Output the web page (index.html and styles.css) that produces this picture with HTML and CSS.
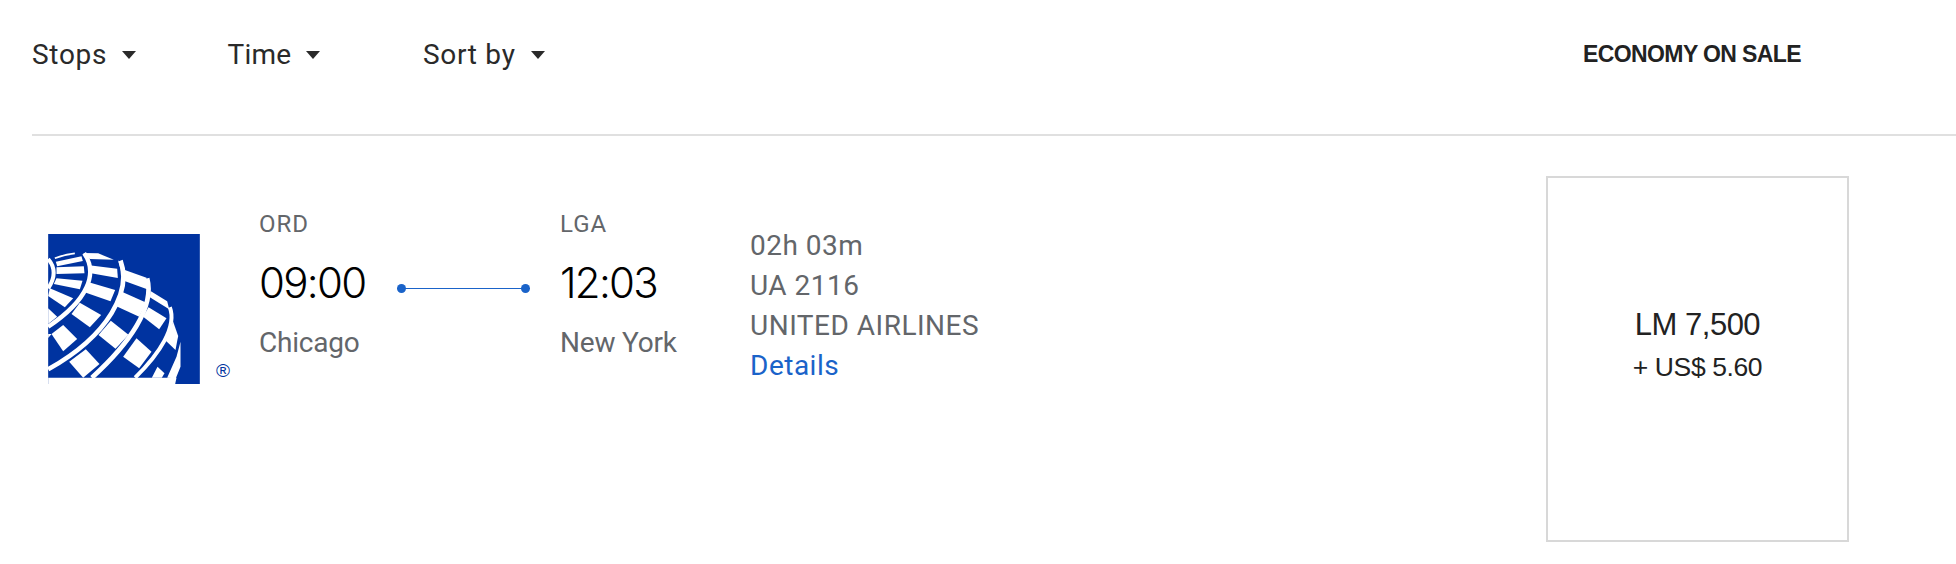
FILE: index.html
```html
<!DOCTYPE html>
<html lang="en">
<head>
<meta charset="utf-8">
<title>Flight results</title>
<link rel="stylesheet" href="styles.css">
</head>
<body>
<header class="bar">
  <div class="filters">
    <button class="filter">Stops<span class="caret"></span></button>
    <button class="filter filter-tight">Time<span class="caret"></span></button>
    <button class="filter">Sort by<span class="caret"></span></button>
  </div>
  <div class="cabin">ECONOMY ON SALE</div>
</header>
<main class="row">
  <div class="logo">
    <svg class="mark" viewBox="55 72 455 450" width="152" height="150" aria-hidden="true">
      <rect x="55" y="72" width="455" height="450" fill="#0033a0"/>
      <polygon points="55,503 440,503 436,522 55,522" fill="#fff"/>
      <g fill="none" stroke="#fff">
        <path d="M75 145Q105 133 135 130" stroke-width="5"/>
        <path d="M55 147Q88 185 55 235" stroke-width="12"/>
        <path d="M163 130C205 190 175 270 55 350" stroke-width="13"/>
        <path d="M272 152C305 240 240 375 55 478" stroke-width="14"/>
        <path d="M352 205C375 290 300 400 186 503" stroke-width="14"/>
        <path d="M420 292C442 350 390 430 316 503" stroke-width="12"/>
      </g>
      <g fill="#fff">
        <polygon points="160,129 205,130 252,149 180,147"/>
        <polygon points="265,150 285,180 290,195 275,190"/>
        <polygon points="78,155 155,139 159,153 82,169"/>
        <polygon points="80,172 162,169 164,190 80,192"/>
        <polygon points="80,205 158,212 150,238 72,222"/>
        <polygon points="60,235 130,265 105,292 55,258"/>
        <polygon points="55,295 82,320 55,342"/>
        <polygon points="178,166 262,176 264,204 175,188"/>
        <polygon points="172,215 256,240 242,274 160,245"/>
        <polygon points="150,278 214,315 180,352 125,312"/>
        <polygon points="65,372 100,345 142,387 100,424"/>
        <polygon points="55,372 65,372 55,384"/>
        <polygon points="285,180 350,203 352,238 282,212"/>
        <polygon points="276,245 350,278 328,320 258,288"/>
        <polygon points="243,332 296,374 257,416 206,375"/>
        <polygon points="168,418 209,462 160,503 118,455"/>
        <polygon points="362,243 412,274 418,298 360,262"/>
        <polygon points="356,292 410,325 388,358 340,320"/>
        <polygon points="320,385 365,425 328,475 280,440"/>
        <polygon points="430,335 445,378 437,420 408,392"/>
        <polygon points="383,470 404,490 396,503 366,503"/>
        <polygon points="452,395 452,470 438,505 412,503 440,440"/>
      </g>
    </svg>
    <span class="reg">®</span>
  </div>
  <div class="leg">
    <div class="stop stop-from">
      <div class="code">ORD</div>
      <div class="time">09:00</div>
      <div class="city">Chicago</div>
    </div>
    <div class="link"></div>
    <div class="stop stop-to">
      <div class="code">LGA</div>
      <div class="time">12:03</div>
      <div class="city">New York</div>
    </div>
  </div>
  <div class="details">
    <div>02h 03m</div>
    <div>UA 2116</div>
    <div>UNITED AIRLINES</div>
    <a class="more" href="#">Details</a>
  </div>
  <div class="fare">
    <div class="miles">LM 7,500</div>
    <div class="cash">+ US$ 5.60</div>
  </div>
</main>
</body>
</html>
```
FILE: styles.css
```css
* { box-sizing: border-box; }
html, body { margin: 0; padding: 0; background: #fff; }
body { width: 1956px; height: 564px; overflow: hidden; font-family: Roboto, "Liberation Sans", sans-serif; }

.bar {
  margin-left: 32px;
  height: 136px;
  border-bottom: 2px solid #e0e0e0;
  display: flex;
  align-items: flex-start;
  padding-top: 37px;
}
.filters { display: flex; width: 1551px; }
.filter {
  width: 195.5px;
  display: flex;
  align-items: center;
  padding: 0;
  border: 0;
  background: none;
  font: 400 28px/36px Roboto, sans-serif;
  letter-spacing: 0.7px;
  color: #2a2a2a;
  text-align: left;
}
.filter-tight { letter-spacing: 0.2px; }
.caret {
  margin-left: 15px;
  width: 0;
  height: 0;
  border-left: 7.5px solid transparent;
  border-right: 7.5px solid transparent;
  border-top: 8px solid #2a2a2a;
}
.cabin {
  font: 700 23px/36px "Liberation Sans", sans-serif;
  letter-spacing: -0.6px;
  color: #222;
  margin-top: -1px;
}

.row { display: flex; align-items: flex-start; padding: 40px 0 0 48px; }
.logo { display: flex; align-items: flex-end; width: 211px; margin-top: 58px; height: 150px; }
.mark { display: block; flex: none; }
.reg { font: 400 19px/20px "Liberation Sans", sans-serif; color: #0033a0; margin: 0 0 3px 16px; }

.leg { display: flex; align-items: flex-start; padding-top: 33px; }
.stop-from { width: 138px; }
.stop-to { width: 190px; }
.code { font: 400 24px/30px Roboto, sans-serif; letter-spacing: 1px; color: #63666a; }
.time { font: 300 42px/50px Inter, "Liberation Sans", sans-serif; letter-spacing: -1.7px; color: #000; margin-top: 19px; }
.city { font: 400 28px/40px Roboto, sans-serif; letter-spacing: -0.2px; color: #63666a; margin-top: 15px; }
.link {
  position: relative;
  width: 133px;
  height: 1px;
  margin: 79px 30px 0 0;
  background: #1a63c9;
}
.link::before, .link::after {
  content: "";
  position: absolute;
  top: -4px;
  width: 9px;
  height: 9px;
  border-radius: 50%;
  background: #1a63c9;
}
.link::before { left: 0; }
.link::after { right: 0; }
.details { font: 400 28px/40px Roboto, sans-serif; letter-spacing: 0.5px; color: #63666a; padding-top: 50px; width: 796px; }
.more { color: #1a63c9; text-decoration: none; display: block; }

.fare {
  width: 303px;
  height: 366px;
  border: 2px solid #d8d8d8;
  display: flex;
  flex-direction: column;
  align-items: center;
  justify-content: center;
  padding-bottom: 28px;
  color: #222;
}
.miles { font: 400 31px/44px "Liberation Sans", sans-serif; letter-spacing: -0.5px; }
.cash { font: 400 26.5px/40px "Liberation Sans", sans-serif; letter-spacing: -0.4px; }
```
